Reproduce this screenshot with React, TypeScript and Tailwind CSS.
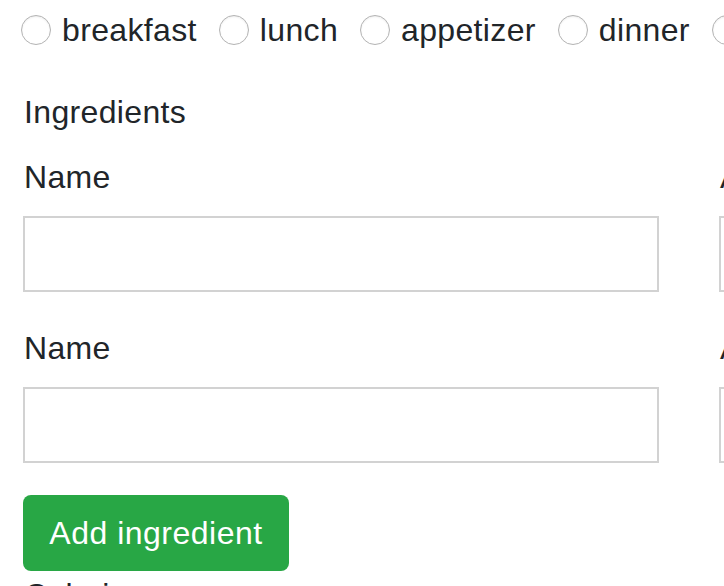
const meals = ["breakfast", "lunch", "appetizer", "dinner", "dessert"];

function Radio({ label }: { label: string }) {
  return (
    <label className="flex shrink-0 items-center">
      <span className="h-[30px] w-[30px] rounded-full border-[1.5px] border-[#b3b3b3] bg-white shadow-[inset_0_1px_2px_rgba(0,0,0,0.08)]" />
      <span className="ml-[11px] mr-[22px]">{label}</span>
    </label>
  );
}

function Field({ label }: { label: string }) {
  return (
    <div>
      <label className="block h-[48px] pl-[1px]">{label}</label>
      <input
        type="text"
        className="mt-[15px] block h-[76px] w-full border-2 border-[#d2d2d2] bg-white outline-none"
      />
    </div>
  );
}

export default function App() {
  return (
    <div
      className="h-[586px] w-[724px] overflow-hidden bg-white pl-[23px] text-[32px] leading-[48px] tracking-[0.35px] text-[#212529]"
      style={{ fontFamily: '"Liberation Sans", Arial, sans-serif' }}
    >
      <div className="-ml-[2px] mt-[6px] flex h-[48px] items-center">
        {meals.map((m) => (
          <Radio key={m} label={m} />
        ))}
      </div>

      <p className="mt-[34px] h-[48px] pl-[1px]">Ingredients</p>

      <div className="mt-[17px] flex flex-col gap-[32px]">
        {[0, 1].map((i) => (
          <div key={i} className="grid w-[1332px] grid-cols-[636px_636px] gap-x-[60px]">
            <Field label="Name" />
            <Field label="Amount" />
          </div>
        ))}
      </div>

      <button
        type="button"
        className="mt-[32px] flex h-[76px] w-[266px] items-center justify-center rounded-[8px] bg-[#28a745] tracking-[0.5px] text-white"
      >
        Add ingredient
      </button>

      <p className="h-[48px] pl-[1px]">Calories</p>
    </div>
  );
}
